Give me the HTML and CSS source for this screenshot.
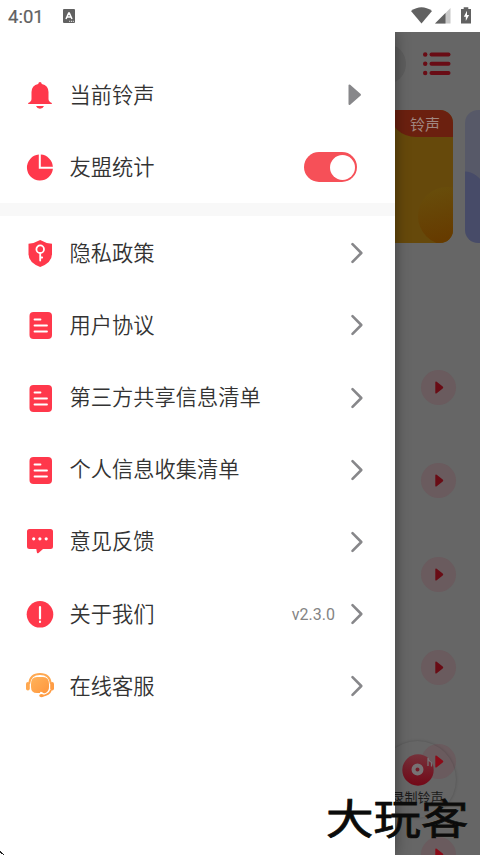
FILE: index.html
```html
<!DOCTYPE html>
<html lang="zh-CN">
<head>
<meta charset="utf-8">
<title>铃声</title>
<link rel="stylesheet" href="styles.css">
</head>
<body>
<svg class="defs" width="0" height="0" aria-hidden="true">
  <defs>
    <symbol id="doc" viewBox="0 0 28 28"><rect x="3.500" y="1" width="22.500" height="27" rx="4" fill="#ff384b"/><path d="M8.500 8.500h6M8.500 14.500h12.500M8.500 20.500h12.500" stroke="#fff" stroke-width="1.800" stroke-linecap="round"/></symbol>
    <symbol id="chev" viewBox="0 0 14 22"><path d="M2.5 2.2L11.3 11 2.5 19.8" fill="none" stroke="#87878a" stroke-width="2.6" stroke-linecap="round" stroke-linejoin="round"/></symbol>
    <symbol id="play" viewBox="0 0 35 35"><path d="M14.3 12.3v10.4q.1 1.4 1.4.6l6-4.8q1.200-1 0-2l-6-4.800q-1.300-.8-1.400.6z"/></symbol>
  </defs>
</svg>
<div class="phone">
  <header class="status">
    <span class="time">4:01</span>
    <svg class="input-icon" width="12" height="14" viewBox="0 0 12 14"><rect width="12" height="14" rx="1" fill="#616161"/><path d="M3 10L5.700 4h.6L9 10M4.200 8h3.600" fill="none" stroke="#fff" stroke-width="1.500"/><path d="M6.200 12.300h1m.8 0h1m.8 0h1" stroke="#fff"/></svg>
    <svg class="signals" width="62" height="18" viewBox="0 0 62 18"><path d="M1 4Q11.500-3.500 22 4L11.500 16.500z" fill="#616161"/><path d="M25 16.500L40.500 1v15.500z" fill="#c8c8c8"/><path d="M25 16.500L35.500 6v10.500z" fill="#616161"/><path d="M51 2h2.700V.2h4.600V2H61v14.500H51z" fill="#616161"/><path d="M57 3.800l-3.200 6h2V14l3.300-6h-2.100z" fill="#fff"/></svg>
  </header>
  <div class="stage">
    <main class="home">
      <div class="topbar">
        <div class="search"></div>
        <svg width="28" height="24" viewBox="0 0 28 24" fill="#690c15"><circle cx="2.200" cy="2.500" r="2.200"/><circle cx="2.200" cy="11.700" r="2.200"/><circle cx="2.200" cy="21" r="2.200"/><rect x="6.500" y=".5" width="21" height="4" rx="2"/><rect x="6.500" y="9.700" width="21" height="4" rx="2"/><rect x="6.500" y="19" width="21" height="4" rx="2"/></svg>
      </div>
      <div class="banners">
        <div class="banner gold"><span class="tag">铃声</span><i class="ball"></i></div>
        <div class="banner violet"></div>
      </div>
      <div class="songs">
        <svg class="play"><use href="#play"/></svg>
        <svg class="play"><use href="#play"/></svg>
        <svg class="play"><use href="#play"/></svg>
        <svg class="play"><use href="#play"/></svg>
        <svg class="play bright"><use href="#play"/></svg>
        <svg class="play bright"><use href="#play"/></svg>
      </div>
      <div class="record">
        <svg width="32" height="32" viewBox="0 0 32 32"><defs><linearGradient id="disc" x2="0" y2="1"><stop stop-color="#75313a"/><stop offset="1" stop-color="#730817"/></linearGradient></defs><circle cx="16" cy="16" r="15.700" fill="url(#disc)"/><circle cx="15.500" cy="15.500" r="4" fill="none" stroke="#777274" stroke-width="4"/><path d="M26 12V4q1 3.500 3.500 4.500v4" fill="none" stroke="#777274" stroke-width="1.300"/></svg>
        <span>录制铃声</span>
      </div>
    </main>
    <aside class="drawer">
      <div class="row"><svg class="icon" viewBox="0 0 28 28" fill="#ff384b"><path d="M14 1q1.500 0 1.800 1.900Q22.500 4.500 22.500 11v7q0 2.500 3.300 4v1H2.200v-1q3.300-1.500 3.300-4v-7q0-6.500 6.700-8.100Q12.500 1 14 1zM10 25h8q-1.200 2.800-4 2.800T10 25z"/></svg><span class="label">当前铃声</span><svg class="solid" width="15" height="22" viewBox="0 0 15 22"><path d="M2.500 1.500v18.500L13 10.800z" fill="#87878a" stroke="#87878a" stroke-width="2" stroke-linejoin="round"/></svg></div>
      <div class="row"><svg class="icon" viewBox="0 0 28 28"><path d="M12.800 1.600A13 13 0 1 0 26.900 15.700H12.800zM14.800 1.600A13 13 0 0 1 26.900 13.700H14.800z" fill="#ff384b"/></svg><span class="label">友盟统计</span><span class="toggle"><i></i></span></div>
      <div class="divider"></div>
      <div class="row"><svg class="icon" viewBox="0 0 28 28"><path d="M14.200 1Q20 4.500 26 4.800V15q0 8.500-11.800 13Q2.500 23.500 2.500 15V4.800Q8 4.500 14.200 1z" fill="#ff384b"/><circle cx="14.200" cy="10.200" r="3.800" fill="none" stroke="#fff" stroke-width="1.800"/><path d="M14.200 14V21.500m0-3h2" stroke="#fff" stroke-width="1.800" stroke-linecap="round"/></svg><span class="label">隐私政策</span><svg class="chev"><use href="#chev"/></svg></div>
      <div class="row"><svg class="icon"><use href="#doc"/></svg><span class="label">用户协议</span><svg class="chev"><use href="#chev"/></svg></div>
      <div class="row"><svg class="icon"><use href="#doc"/></svg><span class="label">第三方共享信息清单</span><svg class="chev"><use href="#chev"/></svg></div>
      <div class="row"><svg class="icon"><use href="#doc"/></svg><span class="label">个人信息收集清单</span><svg class="chev"><use href="#chev"/></svg></div>
      <div class="row"><svg class="icon" viewBox="0 0 28 28"><path d="M3.500 1h21q2.500 0 2.500 2.500v15q0 2.500-2.500 2.500H17l-4.500 4q-1.500 1-1.700-1l-.5-3H3.500Q1 21 1 18.500v-15Q1 1 3.500 1z" fill="#ff384b"/><g fill="#fff"><circle cx="7.700" cy="10.800" r="1.600"/><circle cx="13.900" cy="10.800" r="1.600"/><circle cx="20.200" cy="10.800" r="1.600"/></g></svg><span class="label">意见反馈</span><svg class="chev"><use href="#chev"/></svg></div>
      <div class="row"><svg class="icon" viewBox="0 0 28 28"><circle cx="14" cy="14.300" r="13.300" fill="#ff384b"/><path d="M14 7v11.500m0 3.200v.3" stroke="#fff" stroke-width="2.200" stroke-linecap="round"/></svg><span class="label">关于我们</span><span class="version">v2.3.0</span><svg class="chev"><use href="#chev"/></svg></div>
      <div class="row"><svg class="icon" viewBox="0 0 28 28"><defs><linearGradient id="org" x2="1" y2="1"><stop stop-color="#ffb35b"/><stop offset="1" stop-color="#ff963d"/></linearGradient></defs><path d="M3.200 12Q4 2 14 2t10.800 10" fill="none" stroke="#ffa850" stroke-width="1.900"/><rect x="0" y="10" width="3.800" height="8.500" rx="1.900" fill="#ffa850"/><rect x="24.200" y="10" width="3.800" height="8.500" rx="1.900" fill="#ff9d45"/><path d="M11 5h6q6 0 6 7v3q0 4.200-3.500 6-2 1-3.200-.8-2.300-1-2.300.8H11q-6 0-6-6v-3q0-7 6-7z" fill="url(#org)"/><path d="M25 18q-1.500 5-9.500 6" fill="none" stroke="#ff9d45" stroke-width="1.800"/><ellipse cx="15.500" cy="23.600" rx="2.300" ry="1.700" fill="#ff9d45"/></svg><span class="label">在线客服</span><svg class="chev"><use href="#chev"/></svg></div>
    </aside>
    <div class="brand">大玩客</div>
    <svg class="corner" width="4" height="4" viewBox="0 0 4 4"><path d="M0 0h1v1h1v1h1v1h1v1H3V3H1V2H0z" fill="#222"/></svg>
  </div>
</div>
</body>
</html>
```
FILE: styles.css
```css
* { box-sizing: border-box; }
body { margin: 0; font-family: Roboto, "Noto Sans CJK SC", sans-serif; }
.defs { position: absolute; }
.phone { width: 480px; height: 855px; display: flex; flex-direction: column; overflow: hidden; background: #fff; }
.status { height: 32px; flex: none; display: flex; align-items: center; padding: 0 8px; color: #616161; }
.time { width: 37px; font-size: 18.5px; line-height: 32px; padding-top: 2px; -webkit-text-stroke: .2px #616161; }
.input-icon { margin-left: 18px; }
.signals { margin-left: auto; }
.stage { position: relative; flex: 1; min-height: 0; background: #666; overflow: hidden; }
.home { height: 100%; display: flex; flex-direction: column; }
.topbar { height: 64px; flex: none; display: flex; align-items: center; gap: 17px; }
.search { width: 390px; height: 40px; margin-left: 16px; border-radius: 20px; background: #5e5e5e; }
.banners { height: 133px; flex: none; display: flex; gap: 12px; margin-top: 14px; padding-left: 16px; }
.banner { flex: none; height: 133px; border-radius: 13px; overflow: hidden; position: relative; }
.gold { width: 437px; background: #66490b; }
.tag { position: absolute; right: 0; top: 0; width: 64px; height: 27px; padding: 1px 13px 0 0; background: #6b200f; border-bottom-left-radius: 27px 26px; color: #a08780; font-size: 15px; line-height: 28px; text-align: right; }
.ball { position: absolute; right: -23px; top: 77px; width: 58px; height: 58px; border-radius: 50%; background: linear-gradient(165deg, #684f0c, #663b00 80%); }
.violet { width: 60px; background: radial-gradient(ellipse 40px 100px at 0 161px, #474b68 99%, #575968); }
.songs { display: flex; flex-direction: column; gap: 58.6px; align-items: flex-end; padding: 126.500px 24px 0 0; }
.play { display: block; flex: none; width: 35px; height: 35px; border-radius: 50%; background: #6a5b5e; fill: #690c15; }
.bright { fill: #8b0b18; }
.record { position: absolute; left: 379px; top: 709px; width: 77px; height: 77px; border-radius: 50%; display: flex; flex-direction: column; align-items: center; padding-top: 13px; box-shadow: 0 0 3px rgba(0,0,0,.22); color: #1b1b1b; font-size: 13px; line-height: 18px; }
.record svg { flex: none; }
.record span { margin-top: 3px; white-space: nowrap; }
.drawer { position: absolute; left: 0; top: 0; bottom: 0; width: 395px; padding-top: 27px; background: #fff; box-shadow: 0 0 14px rgba(0,0,0,.4); }
.row { height: 72.150px; display: flex; align-items: center; padding: 0 31px 0 26px; }
.icon { width: 28px; height: 28px; flex: none; margin-right: 15.500px; }
.label { color: #333; font-size: 21.250px; line-height: 30px; white-space: nowrap; margin-top: 1px; font-weight: 350; }
.chev { width: 14px; height: 22px; margin-left: auto; }
.solid { margin: -1px 2px 0 auto; }
.toggle { width: 53px; height: 30px; margin: 0 7px 0 auto; border-radius: 15px; background: #f65058; display: flex; justify-content: flex-end; align-items: center; padding-right: 2px; }
.toggle i { width: 25px; height: 25px; border-radius: 50%; background: #fff; }
.divider { height: 13px; margin-bottom: 1px; background: #f8f8f8; }
.version { margin-left: auto; color: #848484; font-size: 16px; margin-top: 1px; }
.version + .chev { margin-left: 15px; }
.brand { position: absolute; left: 326px; top: 758px; color: #0b0b0b; font-size: 47.500px; line-height: 60px; font-weight: 400; white-space: nowrap; transform: scaleY(.87); -webkit-text-stroke: .9px #0b0b0b; text-shadow: 0 0 1px #b9a97a; }
.corner { position: absolute; left: 0; bottom: 0; }
```
